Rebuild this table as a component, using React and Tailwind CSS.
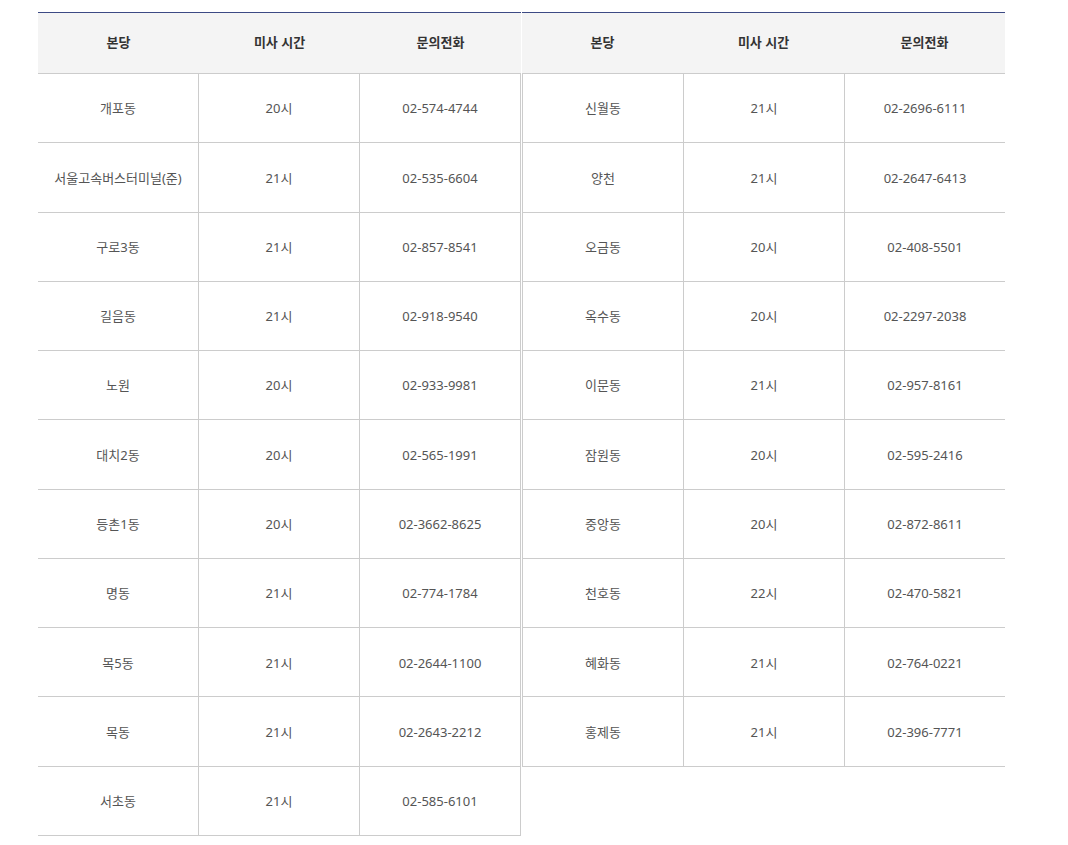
const left = [
  ['개포동', '20시', '02-574-4744'],
  ['서울고속버스터미널(준)', '21시', '02-535-6604'],
  ['구로3동', '21시', '02-857-8541'],
  ['길음동', '21시', '02-918-9540'],
  ['노원', '20시', '02-933-9981'],
  ['대치2동', '20시', '02-565-1991'],
  ['등촌1동', '20시', '02-3662-8625'],
  ['명동', '21시', '02-774-1784'],
  ['목5동', '21시', '02-2644-1100'],
  ['목동', '21시', '02-2643-2212'],
  ['서초동', '21시', '02-585-6101'],
];

const right = [
  ['신월동', '21시', '02-2696-6111'],
  ['양천', '21시', '02-2647-6413'],
  ['오금동', '20시', '02-408-5501'],
  ['옥수동', '20시', '02-2297-2038'],
  ['이문동', '21시', '02-957-8161'],
  ['잠원동', '20시', '02-595-2416'],
  ['중앙동', '20시', '02-872-8611'],
  ['천호동', '22시', '02-470-5821'],
  ['혜화동', '21시', '02-764-0221'],
  ['홍제동', '21시', '02-396-7771'],
];

function MassTable({ rows, side }) {
  const cellBorder = side === 'left' ? 'border-r' : 'border-l';
  return (
    <div className="w-[483px] border-t border-[#3c4a84]">
      <div className="grid grid-cols-3 h-[61px] bg-[#f4f4f4] border-b border-[#cccccc] text-[13px] font-bold text-[#333333]">
        <div className="flex items-center justify-center">본당</div>
        <div className="flex items-center justify-center">미사 시간</div>
        <div className="flex items-center justify-center">문의전화</div>
      </div>
      {rows.map((r) => (
        <div key={r[0]} className="grid grid-cols-3 h-[69.27px] border-b border-[#cccccc] text-[13px] text-[#555555]">
          {r.map((c, i) => (
            <div key={i} className={`flex items-center justify-center pt-[2px] ${cellBorder} border-[#cccccc]`}>
              {c}
            </div>
          ))}
        </div>
      ))}
    </div>
  );
}

export default function App() {
  return (
    <div
      className="min-h-screen bg-white pt-3 pl-[38px]"
      style={{ fontFamily: '"Noto Sans", "Noto Sans CJK KR", sans-serif' }}
    >
      <div className="flex items-start gap-px">
        <MassTable rows={left} side="left" />
        <MassTable rows={right} side="right" />
      </div>
    </div>
  );
}
